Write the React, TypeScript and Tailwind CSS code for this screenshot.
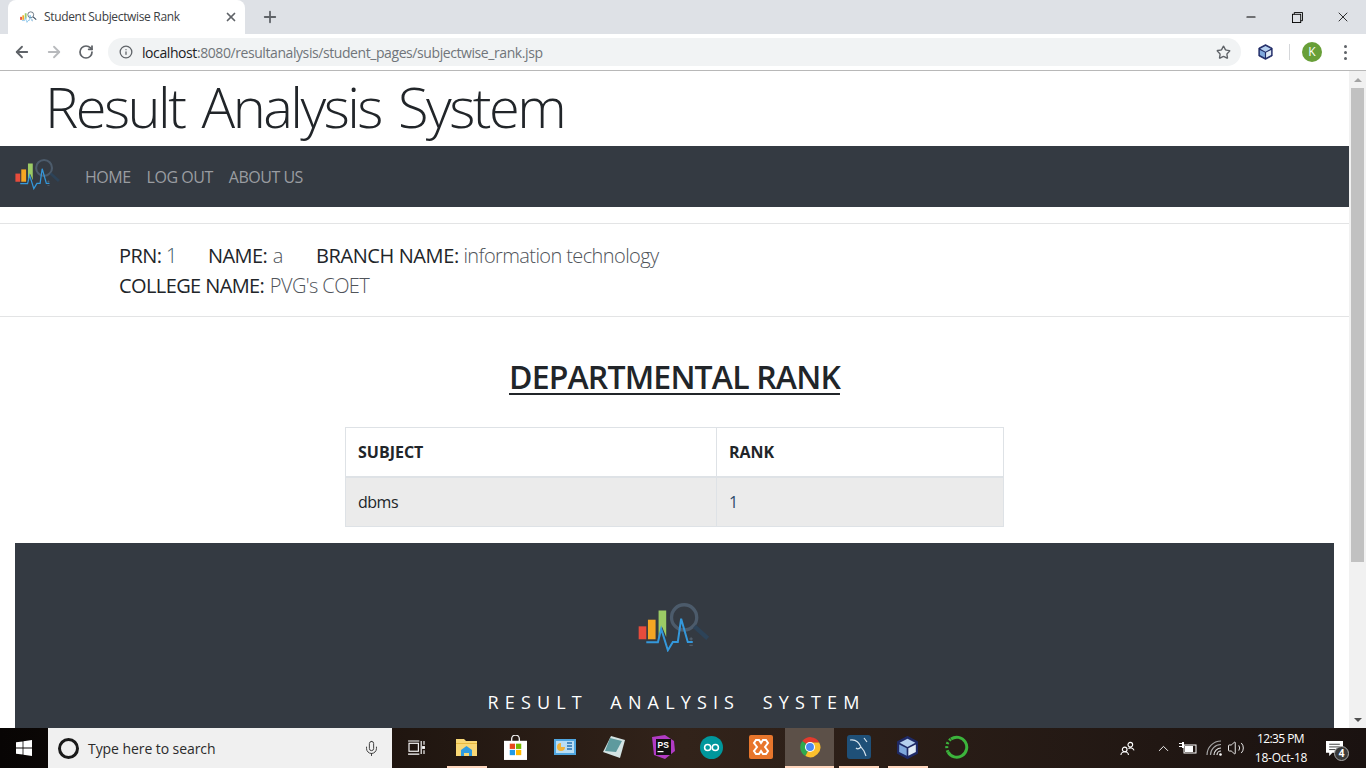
import React from "react";
import {
  ArrowLeft,
  ArrowRight,
  RotateCw,
  Info,
  Star,
  Plus,
  X,
  Minus,
  ChevronUp,
  Mic,
  Volume2,
} from "lucide-react";

const SEGOE = "font-['Open_Sans','Noto_Sans',sans-serif]";

const Logo = ({ className }: { className: string }) => (
  <svg viewBox="85 35 220 150" className={className}>
    <rect x="87" y="108" width="23" height="39" fill="#e74c3c" />
    <rect x="115" y="88" width="23" height="59" fill="#f5a623" />
    <path d="M147 60h23v80l-12-30-11 35z" fill="#9ccc65" />
    <circle cx="224" cy="81" r="38" fill="none" stroke="#4c5b6b" strokeWidth="10" />
    <path d="M255 108l40 36" stroke="#2d4358" strokeWidth="13" fill="none" />
    <path
      d="M110 156h35l10-40 20 64 15-25h15l10-70 20 70h15"
      fill="none"
      stroke="#3498db"
      strokeWidth="6"
    />
    <path d="M240 146h10M245 141v10M240 165h10" stroke="#5b6875" strokeWidth="3" />
  </svg>
);

const TabFavicon = () => <Logo className="w-[17px] h-[12px] ml-[1px]" />;

const VBoxCube = ({ className }: { className: string }) => (
  <svg viewBox="0 0 24 24" className={className}>
    <path d="M12 1.500l9.500 5v11l-9.500 5-9.500-5v-11z" fill="#1f2a66" stroke="#1f2a66" strokeLinejoin="round" />
    <path d="M12 3.500l7.500 4-7.500 4-7.500-4z" fill="#b5d0ef" />
    <path d="M4 9l7.200 3.800V20L4 16.300z" fill="#7fa8dc" />
    <path d="M12.800 12.800L20 9v7.300L12.800 20z" fill="#dfeaf5" />
  </svg>
);

const ChromeBar = () => (
  <div className="shrink-0 bg-white">
    <div className="h-[34px] bg-[#dee1e6] flex items-stretch pl-2">
      <div className="w-[237px] bg-white rounded-t-lg flex items-center pl-[11px] pr-[7px]">
        <TabFavicon />
        <span className={`${SEGOE} ml-[7px] text-[12px] tracking-[-0.028em] text-[#3c4043] whitespace-nowrap`}>
          Student Subjectwise Rank
        </span>
        <X className="ml-auto w-[14px] h-[14px] text-[#5f6368]" strokeWidth={3} />
      </div>
      <div className="ml-[16px] flex items-center">
        <Plus className="w-[18px] h-[18px] text-[#5f6368]" strokeWidth={2.4} />
      </div>
      <div className="ml-auto flex items-center">
        <div className="w-[46px] flex justify-center">
          <Minus className="w-[14px] h-[14px] text-black" strokeWidth={1.8} />
        </div>
        <div className="w-[46px] flex justify-center">
          <svg viewBox="0 0 12 12" className="w-[11px] h-[11px]" fill="none" stroke="#000" strokeWidth="1">
            <rect x="0.500" y="2.500" width="9" height="9" />
            <path d="M2.500 2.500v-2h9v9h-2" />
          </svg>
        </div>
        <div className="w-[46px] flex justify-center">
          <X className="w-[16px] h-[16px] text-black" strokeWidth={1.2} />
        </div>
      </div>
    </div>
    <div className="h-[37px] flex items-center border-b border-[#b8b8b8] pl-[13px]">
      <ArrowLeft className="w-[18px] h-[18px] text-[#5f6368]" strokeWidth={2.4} />
      <ArrowRight className="ml-[14px] w-[18px] h-[18px] text-[#b8babd]" strokeWidth={2.4} />
      <RotateCw className="ml-[15px] w-[16px] h-[16px] text-[#5f6368]" strokeWidth={2.6} />
      <div className="ml-[14px] w-[1133px] h-[28px] bg-[#f1f3f4] rounded-full flex items-center pl-[11px] pr-[10px]">
        <Info className="w-[14px] h-[14px] text-[#5f6368]" strokeWidth={2.2} />
        <span className={`${SEGOE} ml-[9px] text-[14px] tracking-[-0.03em] text-[#70757a]`}>
          <span className="text-[#202124]">localhost</span>:8080/resultanalysis/student_pages/subjectwise_rank.jsp
        </span>
        <Star className="ml-auto w-[15px] h-[15px] text-[#5f6368]" strokeWidth={2.2} />
      </div>
      <VBoxCube className="ml-[16px] w-[17px] h-[18px]" />
      <div className="ml-[15px] w-px h-[16px] bg-[#d5d7da]" />
      <div className={`${SEGOE} ml-[12px] w-[20px] h-[20px] rounded-full bg-[#689f38] text-white text-[12px] flex items-center justify-center`}>
        K
      </div>
      <div className="ml-[22px] flex flex-col gap-[3px]">
        <div className="w-[3px] h-[3px] rounded-full bg-[#5f6368]" />
        <div className="w-[3px] h-[3px] rounded-full bg-[#5f6368]" />
        <div className="w-[3px] h-[3px] rounded-full bg-[#5f6368]" />
      </div>
    </div>
  </div>
);

const Scrollbar = () => (
  <div className="w-[17px] shrink-0 bg-[#f1f1f1] flex flex-col items-center">
    <div className="h-[17px] flex items-center justify-center">
      <div className="w-0 h-0 border-x-[4px] border-x-transparent border-b-[4px] border-b-[#a3a3a3]" />
    </div>
    <div className="w-[13px] h-[474px] bg-[#c1c1c1]" />
    <div className="mt-auto h-[17px] flex items-center justify-center">
      <div className="w-0 h-0 border-x-[4px] border-x-transparent border-t-[4px] border-t-[#505050]" />
    </div>
  </div>
);

const Page = () => (
  <div className={`${SEGOE} flex-1 min-w-0 text-[#212529]`}>
    <div className="h-[75px] pl-[45px] pt-[2px]">
      <h1 className="text-[56px] font-light leading-[67px] tracking-[-0.045em] [word-spacing:0.09em] whitespace-nowrap">
        Result Analysis System
      </h1>
    </div>
    <nav className="h-[61px] bg-[#343a42] flex items-center pl-[15px]">
      <Logo className="w-[46px] h-[32px] -mt-[5px]" />
      <ul className="ml-[16px] flex text-[16px] tracking-[-0.03em] text-[#9a9da1]">
        <li className="px-2">HOME</li>
        <li className="px-2">LOG OUT</li>
        <li className="px-2">ABOUT US</li>
      </ul>
    </nav>
    <div className="mt-[16px] h-[94px] border-y border-[#e3e4e5] pl-[119px] pt-[17px] text-[20px] leading-[30px] tracking-[-0.03em]">
      <div className="flex">
        <span className="w-[89px]">
          PRN: <span className="font-light text-[#3f5a66]">1</span>
        </span>
        <span className="w-[108px]">
          NAME: <span className="font-light text-[#50545a] ml-[1px]">a</span>
        </span>
        <span>
          <span className="tracking-[-0.02em]">BRANCH NAME:</span>{" "}
          <span className="font-light text-[#50545a]">information technology</span>
        </span>
      </div>
      <div>
        COLLEGE NAME: <span className="font-light text-[#50545a] ml-[1px]">PVG's COET</span>
      </div>
    </div>
    <h2 className="mt-[38px] text-center text-[32px] leading-[44px] font-semibold underline underline-offset-[4px] decoration-2 tracking-[-0.026em]">
      DEPARTMENTAL RANK
    </h2>
    <table className="mt-[28px] mx-auto w-[659px] table-fixed border-collapse text-[16px] tracking-[-0.03em]">
      <thead>
        <tr className="h-[49px]">
          <th className="w-[371px] border border-[#dee2e6] border-b-2 pl-3 text-left font-bold tracking-normal">SUBJECT</th>
          <th className="border border-[#dee2e6] border-b-2 pl-3 text-left font-bold tracking-normal">RANK</th>
        </tr>
      </thead>
      <tbody>
        <tr className="h-[50px] bg-[#ebebeb]">
          <td className="border border-[#dee2e6] pl-3 font-normal">dbms</td>
          <td className="border border-[#dee2e6] pl-3 text-[#2d4a6b]">1</td>
        </tr>
      </tbody>
    </table>
    <footer className="mt-[16px] mx-[15px] h-[185px] bg-[#343a42] flex flex-col items-center pt-[59px]">
      <Logo className="w-[73px] h-[50px]" />
      <p className="mt-[38px] ml-[4px] text-[18px] leading-[24px] text-white tracking-[0.342em] [word-spacing:0.65em] whitespace-nowrap">
        RESULT ANALYSIS SYSTEM
      </p>
    </footer>
  </div>
);

const TaskIcon = ({
  children,
  active,
  running,
}: {
  children: React.ReactNode;
  active?: boolean;
  running?: boolean;
}) => (
  <div className={`w-[49px] h-full flex flex-col items-center ${active ? "bg-[#5c5048]" : ""}`}>
    <div className="flex-1 flex items-center justify-center">{children}</div>
    <div className={`h-[2px] ${active ? "w-full" : "w-[40px]"} ${running ? "bg-[#ffd6bd]" : ""}`} />
  </div>
);

const Taskbar = () => (
  <div className="h-[40px] shrink-0 flex items-stretch bg-gradient-to-r from-[#080504] via-[#32231a] to-[#1a1210]">
    <div className="w-[48px] flex items-center justify-center">
      <svg viewBox="0 0 16 16" className="w-[16px] h-[16px]" fill="#fff">
        <path d="M0 2.300l6.600-.9v6.200H0zM7.400 1.300L16 0v7.600H7.400zM0 8.400h6.600v6.200L0 13.700zM7.400 8.400H16V16l-8.600-1.300z" />
      </svg>
    </div>
    <div className="w-[344px] bg-[#f0f0f0] flex items-center pl-[10px] pr-[12px]">
      <div className="w-[21px] h-[21px] rounded-full border-[3px] border-[#1a1a1a]" />
      <span className={`${SEGOE} ml-[9px] text-[14px] tracking-[-0.005em] text-[#2b2b2b]`}>Type here to search</span>
      <Mic className="ml-auto w-[17px] h-[17px] text-[#333]" strokeWidth={1.3} />
    </div>
    <TaskIcon>
      <svg viewBox="0 0 18 16" className="w-[17px] h-[15px]" fill="none" stroke="#fff" strokeWidth="1.200">
        <rect x="1" y="3.500" width="10" height="8.500" />
        <path d="M0 1h12M0 15h12M14 1v14M17 1v4M17 11v4" />
        <rect x="15" y="6.500" width="3" height="3" fill="#fff" stroke="none" />
      </svg>
    </TaskIcon>
    <div className="w-px" />
    <TaskIcon running>
      <svg viewBox="0 0 22 19" className="w-[22px] h-[19px]">
        <path d="M0 1h8l2 2h11v15H0z" fill="#f8d775" />
        <rect x="0" y="5" width="21" height="1" fill="#e7b93f" />
        <path d="M5 12l5.500-4 5.500 4v6h-3v-3H8v3H5z" fill="#2f9be0" />
      </svg>
    </TaskIcon>
    <TaskIcon>
      <svg viewBox="0 0 24 26" className="w-[23px] h-[25px]">
        <path d="M8 7V4a4 4 0 018 0v3" fill="none" stroke="#eee" strokeWidth="1.400" />
        <rect x="0" y="6" width="24" height="20" fill="#fff" />
        <rect x="6" y="9" width="5.500" height="5.500" fill="#e8481c" />
        <rect x="12.500" y="9" width="5.500" height="5.500" fill="#76b900" />
        <rect x="6" y="15.500" width="5.500" height="5.500" fill="#1e9be8" />
        <rect x="12.500" y="15.500" width="5.500" height="5.500" fill="#ffb900" />
      </svg>
    </TaskIcon>
    <TaskIcon>
      <svg viewBox="0 0 22 16" className="w-[22px] h-[16px]">
        <rect width="22" height="16" fill="#4fa6e0" />
        <rect x="2" y="2" width="18" height="12" fill="#b9def5" />
        <path d="M7 4a4 4 0 104 4H7z" fill="#f0b33a" />
        <path d="M13 4h5M13 7h5M13 10h5" stroke="#2470b0" strokeWidth="1.400" />
      </svg>
    </TaskIcon>
    <TaskIcon>
      <svg viewBox="0 0 22 22" className="w-[22px] h-[22px]">
        <path d="M8 0l14 4-5 18L0 16z" fill="#d4e4e4" />
        <path d="M7 2l12 3-6 11-11-1z" fill="#5e9a9e" />
      </svg>
    </TaskIcon>
    <TaskIcon>
      <svg viewBox="0 0 24 24" className="w-[24px] h-[24px]">
        <path d="M1 2l13-2 9 6 1 10-10 8-11-4z" fill="#b13bc4" />
        <rect x="5" y="4" width="15" height="16" fill="#111" />
        <text x="6.500" y="13" fontSize="8.500" fontWeight="700" fill="#fff" fontFamily="Liberation Sans, sans-serif">PS</text>
        <rect x="6.500" y="16" width="6" height="1.200" fill="#fff" />
      </svg>
    </TaskIcon>
    <TaskIcon>
      <svg viewBox="0 0 24 24" className="w-[23px] h-[23px]">
        <circle cx="12" cy="12" r="12" fill="#00979c" />
        <circle cx="8" cy="12" r="3.200" fill="none" stroke="#fff" strokeWidth="1.600" />
        <circle cx="16" cy="12" r="3.200" fill="none" stroke="#fff" strokeWidth="1.600" />
      </svg>
    </TaskIcon>
    <TaskIcon>
      <svg viewBox="0 0 24 24" className="w-[24px] h-[24px]">
        <rect width="24" height="24" rx="2" fill="#e8762c" />
        <path
          d="M7 5h3l2 3 2-3h3l2 3-3 4 3 4-2 3h-3l-2-3-2 3H7l-2-3 3-4-3-4z"
          fill="none"
          stroke="#fff"
          strokeWidth="2"
        />
      </svg>
    </TaskIcon>
    <TaskIcon active running>
      <svg viewBox="0 0 24 24" className="w-[22px] h-[22px]">
        <path d="M12 12L3.600 5.500A11 11 0 0122 7H12z" fill="#e33b2e" />
        <path d="M12 12l-5 9.800A11 11 0 013.600 5.500z" fill="#2da94f" />
        <path d="M12 12V7h10a11 11 0 01-15 14.800z" fill="#fbc02d" />
        <circle cx="12" cy="12" r="5.500" fill="#fff" />
        <circle cx="12" cy="12" r="4.300" fill="#4a89f3" />
      </svg>
    </TaskIcon>
    <TaskIcon running>
      <svg viewBox="0 0 24 24" className="w-[24px] h-[24px]">
        <rect width="24" height="24" rx="3" fill="#1f5078" />
        <path d="M3 5c6-1 9 2 11 7l3 4 2 5M14 12c-2 2-4 2-5 1M17 3l3 4" fill="none" stroke="#d8e4ec" strokeWidth="1.200" />
      </svg>
    </TaskIcon>
    <TaskIcon running>
      <VBoxCube className="w-[25px] h-[25px]" />
    </TaskIcon>
    <TaskIcon>
      <svg viewBox="0 0 24 24" className="w-[24px] h-[24px]" fill="none">
        <path d="M6 4a10 10 0 11-3 13" stroke="#3cb43c" strokeWidth="3" />
        <path d="M3 17a10 10 0 013-13" stroke="#3cb43c" strokeWidth="3" strokeDasharray="2 2" />
      </svg>
    </TaskIcon>
    <div className="flex-1 flex items-center pr-[20px] text-white">
      <svg viewBox="0 0 16 16" className="ml-auto w-[15px] h-[15px]" fill="none" stroke="#fff" strokeWidth="1.200">
        <circle cx="5" cy="9" r="2.500" />
        <path d="M1 15c0-2 2-3.500 4-3.500s4 1.500 4 3.500" />
        <circle cx="11" cy="4" r="2.500" />
        <path d="M9 8c2-1.500 5-.5 6 2" />
      </svg>
      <ChevronUp className="ml-[20px] w-[17px] h-[17px]" strokeWidth={1.3} />
      <svg viewBox="0 0 18 12" className="ml-[7px] w-[18px] h-[12px]" fill="#fff">
        <path d="M0 1.500h3M0 4.500h3" stroke="#fff" />
        <path d="M3 0h2v6H3z" />
        <rect x="5" y="3" width="12" height="8" fill="none" stroke="#fff" />
        <rect x="6" y="4" width="8" height="6" />
      </svg>
      <svg viewBox="0 0 16 16" className="ml-[9px] w-[16px] h-[16px]" fill="none" stroke="#a8a8a8" strokeWidth="1.200">
        <path d="M1 15A14 14 0 0115 1" />
        <path d="M4.500 15A10.500 10.500 0 0115 4.500" />
        <path d="M8 15A7 7 0 0115 8" stroke="#e0e0e0" />
        <path d="M11 15a4 4 0 014-4" stroke="#e0e0e0" />
        <circle cx="14.500" cy="14.500" r="1.300" fill="#fff" stroke="none" />
      </svg>
      <Volume2 className="ml-[5px] w-[18px] h-[18px]" strokeWidth={1.2} />
      <div className={`${SEGOE} -ml-[2px] w-[76px] text-center text-[12px] leading-[19px] tracking-[-0.02em]`}>
        <div className="-ml-[1px] tracking-[-0.05em]">12:35 PM</div>
        <div>18-Oct-18</div>
      </div>
      <div className="relative ml-[7px] w-[20px]">
        <svg viewBox="0 0 16 14" className="w-[17px] h-[15px]" fill="#fff">
          <path d="M0 0h16v11H6l-3 3v-3H0z" />
          <path d="M3 3h10M3 5.500h10M3 8h6" stroke="#222" strokeWidth="0.800" />
        </svg>
        <div className={`${SEGOE} absolute -right-[3px] top-[5px] w-[15px] h-[15px] rounded-full bg-[#3a3a3a] border border-[#aaa] text-[10px] font-bold flex items-center justify-center`}>
          4
        </div>
      </div>
    </div>
  </div>
);

export default function App() {
  return (
    <div className="h-screen flex flex-col overflow-hidden bg-white">
      <ChromeBar />
      <div className="flex-1 min-h-0 flex">
        <Page />
        <Scrollbar />
      </div>
      <Taskbar />
    </div>
  );
}
